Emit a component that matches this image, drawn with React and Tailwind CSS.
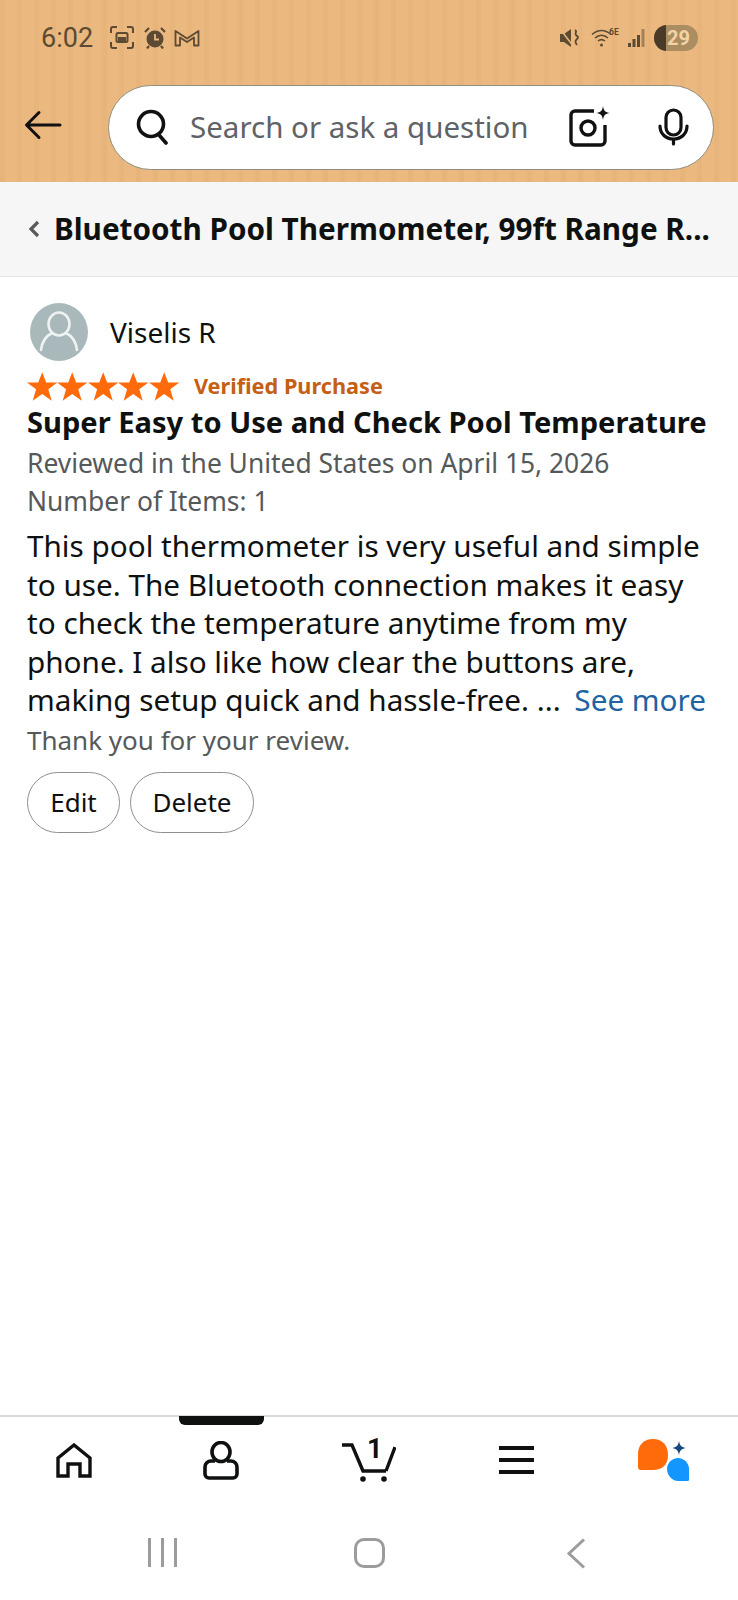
const font = "font-['Noto_Sans',sans-serif]";

function StatusBar() {
  return (
    <div className="flex items-center justify-between h-[74px] pl-[41px] pr-[40px] pt-[1px] text-[#5c4a33]">
      <div className="flex items-center">
        <span className="font-['Roboto',sans-serif] text-[27px] leading-[30px] w-[69px]">6:02</span>
        <svg width="24" height="23" viewBox="0 0 24 23" fill="none" stroke="currentColor" strokeWidth="2">
          <path d="M1 7V3a2 2 0 0 1 2-2h4M17 1h4a2 2 0 0 1 2 2v4M23 16v4a2 2 0 0 1-2 2h-4M7 22H3a2 2 0 0 1-2-2v-4" />
          <rect x="6.5" y="7" width="11" height="9" rx="1.5" />
          <rect x="8" y="11" width="8" height="4" fill="currentColor" stroke="none" />
        </svg>
        <svg className="ml-[10px]" width="22" height="22" viewBox="0 0 22 22">
          <circle cx="11" cy="12" r="8.5" fill="currentColor" />
          <path d="M11 7v5.5h4" fill="none" stroke="#ebb87f" strokeWidth="1.8" />
          <path d="M1 5l4-4M21 5l-4-4M5 19l-2 2.5M17 19l2 2.5" stroke="currentColor" strokeWidth="2.2" />
        </svg>
        <svg className="ml-[8px]" width="26" height="19" viewBox="0 0 26 19" fill="none" stroke="currentColor" strokeWidth="1.800" strokeLinejoin="round">
          <path d="M1.500 17.500V3L13 10.500 24.500 3v14.500h-4.500V9.500L13 14 6 9.500v8z" />
        </svg>
      </div>
      <div className="flex items-center">
        <svg width="22" height="20" viewBox="0 0 22 20">
          <path d="M1 6h4l7-5v18l-7-5H1z" fill="currentColor" />
          <path d="M1 1l14 18" stroke="#ebb87f" strokeWidth="1.5" />
          <path d="M16 2c3 2-1 3 1 5s3 2 1 4-2 3 0 6" fill="none" stroke="currentColor" strokeWidth="1.8" />
        </svg>
        <svg className="ml-[10px]" width="30" height="19" viewBox="0 0 30 19" fill="none" stroke="currentColor" strokeWidth="1.6">
          <path d="M1 6.500c6-5 13-5 19 0M4 10c4-3.500 9-3.500 13 0M7 13c2.500-2 4.500-2 7 0" />
          <circle cx="10.500" cy="17" r="1.500" fill="currentColor" stroke="none" />
          <text x="18" y="7" fontSize="8.500" fontWeight="700" fill="currentColor" stroke="none" fontFamily="Roboto">6E</text>
        </svg>
        <svg className="ml-[7px]" width="19" height="20" viewBox="0 0 19 20">
          <rect x="0" y="15" width="3" height="4" fill="currentColor" />
          <rect x="4.500" y="11" width="3" height="8" fill="currentColor" />
          <rect x="9" y="7" width="3" height="12" fill="currentColor" />
          <rect x="13.500" y="1" width="3" height="18" fill="currentColor" opacity="0.5" />
        </svg>
        <div className="relative ml-[7px] flex items-center justify-center w-[44px] h-[26px] rounded-full bg-[#ab8d62] overflow-hidden">
          <span className="absolute left-0 top-0 h-full w-[12px] bg-[#4a3b28]" />
          <span className="relative pl-[5px] font-['Roboto',sans-serif] font-bold text-[20px] leading-none text-[#f3d3a6]">29</span>
        </div>
      </div>
    </div>
  );
}

function SearchBar() {
  return (
    <div className="flex items-center h-[108px] pb-[2px] pl-[24px] pr-[24px]">
      <svg className="mb-[4px]" width="38" height="30" viewBox="0 0 38 30" fill="none" stroke="#111" strokeWidth="3" strokeLinecap="round" strokeLinejoin="round">
        <path d="M36 15H3M15 2.500L2.500 15 15 27.500" />
      </svg>
      <div className="flex items-center ml-[46px] w-[606px] h-[85px] rounded-full bg-white border border-[#8f8f80] pl-[27px]">
        <svg width="34" height="36" viewBox="0 0 34 36" fill="none" stroke="#111" strokeWidth="3.600" strokeLinecap="round">
          <circle cx="15" cy="15" r="12.500" />
          <path d="M23 26l7 8" />
        </svg>
        <span className={`${font} ml-[20px] text-[29.500px] leading-none text-[#5f6266] whitespace-nowrap w-[379px]`}>
          Search or ask a question
        </span>
        <svg className="mb-[2px]" width="42" height="42" viewBox="0 0 42 42" fill="none" stroke="#111" strokeWidth="3.400" strokeLinejoin="round">
          <path d="M25 6H6a4 4 0 0 0-4 4v26a4 4 0 0 0 4 4h26a4 4 0 0 0 4-4V20" />
          <circle cx="19" cy="23" r="7" />
          <path d="M34 1c.8 5 2 6.200 7 7-5 .8-6.200 2-7 7-.8-5-2-6.200-7-7 5-.8 6.200-2 7-7z" fill="#111" stroke="none" />
        </svg>
        <svg className="ml-[47px]" width="31" height="38" viewBox="0 0 31 38" fill="none" stroke="#111" strokeWidth="3.200" strokeLinecap="round">
          <rect x="8" y="2" width="15" height="25" rx="7.500" />
          <path d="M2 18c0 8 6 13 13.500 13S29 26 29 18M15.500 31v5" />
        </svg>
      </div>
    </div>
  );
}

function Star() {
  return (
    <svg width="30.400" height="29" viewBox="0 0 30 28">
      <path d="M15 0l3.900 10h11.100l-9 6.800 3.400 11.200L15 21.400 5.600 28 9 16.800 0 10h11.100z" fill="#ff6a0a" />
    </svg>
  );
}

function Review() {
  return (
    <div className={`${font} flex-1 bg-white px-[27px] pt-[26px] text-[#0f1111]`}>
      <div className="flex items-center h-[58px] pl-[3px]">
        <div className="flex items-center justify-center w-[58px] h-[58px] rounded-full bg-[#a9b8bb]">
          <svg width="40" height="44" viewBox="0 0 40 44" fill="none" stroke="#eef2f2" strokeWidth="2.600">
            <ellipse cx="20" cy="14" rx="10.500" ry="11.500" />
            <path d="M13 23C7 26 3 31 2 40M27 23c6 3 10 8 11 17" strokeLinecap="round" />
          </svg>
        </div>
        <span className="ml-[22px] text-[28px] leading-none">Viselis R</span>
      </div>
      <div className="flex items-center h-[30px] mt-[10px]">
        <Star /><Star /><Star /><Star /><Star />
        <span className="ml-[15px] font-bold text-[#c45f14] text-[21.700px] leading-none">Verified Purchase</span>
      </div>
      <div className="font-bold text-[29.100px] leading-[38px] mt-[2px] whitespace-nowrap">
        Super Easy to Use and Check Pool Temperature
      </div>
      <div className="text-[#565959] text-[26.400px] leading-[38px] mt-[3px] whitespace-nowrap">
        Reviewed in the United States on April 15, 2026
      </div>
      <div className="text-[#565959] text-[26.400px] leading-[38px] whitespace-nowrap">Number of Items: 1</div>
      <div className="text-[29.700px] leading-[38.500px] mt-[7px] whitespace-nowrap">
        <div>This pool thermometer is very useful and simple</div>
        <div>to use. The Bluetooth connection makes it easy</div>
        <div>to check the temperature anytime from my</div>
        <div>phone. I also like how clear the buttons are,</div>
        <div>
          making setup quick and hassle-free. ... <span className="ml-[6px] text-[#2162a1]">See more</span>
        </div>
      </div>
      <div className="text-[#565959] text-[26px] leading-[38px] mt-[1px] whitespace-nowrap">Thank you for your review.</div>
      <div className="flex gap-[10px] mt-[13px]">
        <button className="h-[61px] w-[93px] rounded-full border border-[#8d9090] text-[26px]">Edit</button>
        <button className="h-[61px] w-[124px] rounded-full border border-[#8d9090] text-[26px]">Delete</button>
      </div>
    </div>
  );
}

function BottomNav() {
  return (
    <div className="relative grid grid-cols-5 h-[92px] pb-[4px] bg-white border-t-2 border-[#d5dbdb] items-center">
      <span className="absolute left-[179px] -top-[1px] w-[85px] h-[9px] rounded-b-[6px] bg-[#0f1111]" />
      <div className="flex justify-center">
        <svg width="36" height="35" viewBox="0 0 36 35" fill="none" stroke="#0f1111" strokeWidth="3.400" strokeLinejoin="miter">
          <path d="M2 33V15L18 2l16 13v18H24V21H12v12z" />
        </svg>
      </div>
      <div className="flex justify-center">
        <svg width="36" height="39" viewBox="0 0 36 39" fill="none" stroke="#0f1111" strokeWidth="3.600">
          <ellipse cx="18" cy="11" rx="9" ry="9.500" />
          <path d="M12 20H8a6 6 0 0 0-6 6v7a4 4 0 0 0 4 4h24a4 4 0 0 0 4-4v-7a6 6 0 0 0-6-6h-4" />
        </svg>
      </div>
      <div className="flex justify-center">
        <div className="relative w-[54px] h-[44px]">
          <svg width="54" height="44" viewBox="0 0 54 44" fill="none" stroke="#0f1111" strokeWidth="3.400" strokeLinejoin="miter">
            <path d="M0 7h10l11 26h23" />
            <path d="M44 33l9-24" />
            <circle cx="21" cy="41" r="2.800" fill="#0f1111" stroke="none" />
            <circle cx="42" cy="41" r="2.800" fill="#0f1111" stroke="none" />
          </svg>
          <span className="absolute left-[25px] -top-[4px] font-['Roboto',sans-serif] font-bold text-[27px] leading-[30px] text-[#0f1111]">1</span>
        </div>
      </div>
      <div className="flex justify-center">
        <div className="flex flex-col gap-[8px] w-[35px]">
          <span className="h-[4px] bg-[#0f1111]" />
          <span className="h-[4px] bg-[#0f1111]" />
          <span className="h-[4px] bg-[#0f1111]" />
        </div>
      </div>
      <div className="flex justify-center">
        <svg width="52" height="44" viewBox="0 0 52 44">
          <path d="M0 29V16C0 7 6 1 15 1c9 0 15 6 15 16s-6 15-15 15H3c-2 0-3-1-3-3z" fill="#ff6a0a" />
          <path d="M51 42V31c0-6-5-11-11-11s-11 5-11 11 5 12 11 12h9c1.500 0 2-.5 2-1z" fill="#1496ff" />
          <path d="M41 3c.8 4.500 2 5.700 6.500 7-4.500 1.300-5.700 2.500-6.500 7-.8-4.500-2-5.700-6.500-7 4.500-1.300 5.700-2.500 6.500-7z" fill="#14497f" />
        </svg>
      </div>
    </div>
  );
}

function AndroidNav() {
  return (
    <div className="grid grid-cols-[207px_207px_207px] justify-center h-[93px] bg-white items-start pt-[31px]">
      <div className="flex justify-center">
        <div className="flex gap-[10px]">
          <span className="w-[3px] h-[29px] bg-[#9c9c9c]" />
          <span className="w-[3px] h-[29px] bg-[#9c9c9c]" />
          <span className="w-[3px] h-[29px] bg-[#9c9c9c]" />
        </div>
      </div>
      <div className="flex justify-center">
        <span className="w-[31px] h-[30px] rounded-[10px] border-[3px] border-[#9c9c9c]" />
      </div>
      <div className="flex justify-center">
        <svg width="20" height="31" viewBox="0 0 20 31" fill="none" stroke="#9c9c9c" strokeWidth="3">
          <path d="M18 1.500L3 15.500l15 14" />
        </svg>
      </div>
    </div>
  );
}

export default function App() {
  return (
    <div className="flex flex-col h-[1600px] w-[738px] bg-white overflow-hidden">
      <div className="h-[182px] bg-[#ebb87f] bg-[repeating-linear-gradient(90deg,rgba(200,150,90,0.11)_0px,rgba(200,150,90,0.11)_5px,transparent_5px,transparent_17px)]">
        <StatusBar />
        <SearchBar />
      </div>
      <div className={`${font} flex items-center h-[95px] bg-[#f6f6f6] border-b border-[#e7e7e7] pl-[28px]`}>
        <svg width="12" height="18" viewBox="0 0 12 18" fill="none" stroke="#5a5a5a" strokeWidth="3.200">
          <path d="M10 2L3 9l7 7" />
        </svg>
        <span className="ml-[14px] font-bold text-[29.700px] leading-none text-[#0f1111] whitespace-nowrap">
          Bluetooth Pool Thermometer, 99ft Range R...
        </span>
      </div>
      <Review />
      <BottomNav />
      <AndroidNav />
    </div>
  );
}
